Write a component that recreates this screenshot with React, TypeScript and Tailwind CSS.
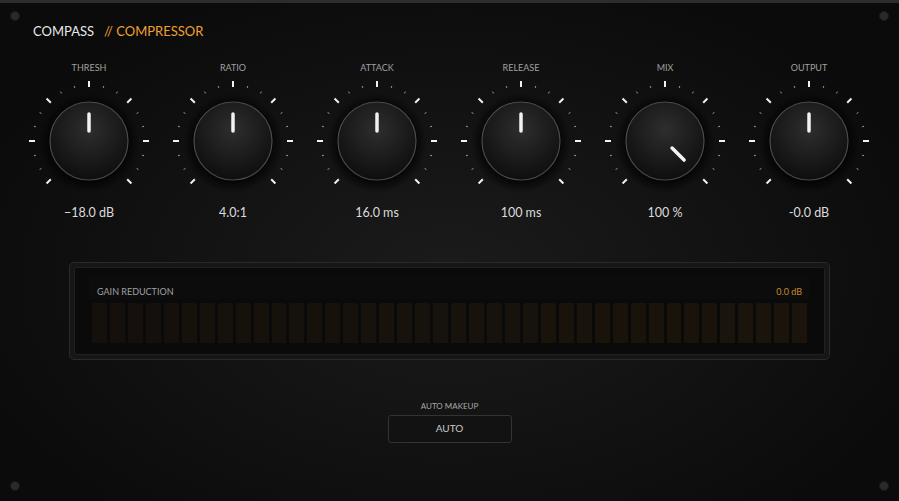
import React from "react";

const F = { fontFamily: '"Lato","Open Sans",sans-serif' };

function Knob({ angle }: { angle: number }) {
  const ticks = [];
  for (let a = -135; a <= 135; a += 15) {
    const major = a % 45 === 0;
    const r1 = major ? 54 : 55;
    const r2 = major ? 60 : 57;
    const rad = ((a - 90) * Math.PI) / 180;
    ticks.push(
      <line key={a} x1={70 + r1 * Math.cos(rad)} y1={70 + r1 * Math.sin(rad)} x2={70 + r2 * Math.cos(rad)} y2={70 + r2 * Math.sin(rad)}
        stroke="#fff" strokeOpacity={major ? 0.95 : 0.6} strokeWidth={major ? 2 : 1} />
    );
  }
  const rad = ((angle - 90) * Math.PI) / 180;
  return (
    <svg width="140" height="140" viewBox="0 0 140 140">
      <defs>
        <radialGradient id="kg" cx="50%" cy="35%" r="65%">
          <stop offset="0" stopColor="#2e2e2e" />
          <stop offset="1" stopColor="#0e0e0e" />
        </radialGradient>
        <radialGradient id="sh" cx="50%" cy="50%" r="50%">
          <stop offset="0.7" stopColor="#000" stopOpacity="0.9" />
          <stop offset="1" stopColor="#000" stopOpacity="0" />
        </radialGradient>
      </defs>
      {ticks}
      <circle cx="70" cy="72" r="50" fill="url(#sh)" />
      <circle cx="70" cy="70" r="39" fill="url(#kg)" stroke="#4a4a4a" strokeWidth="1.2" />
      <line x1={70 + 10 * Math.cos(rad)} y1={70 + 10 * Math.sin(rad)} x2={70 + 27 * Math.cos(rad)} y2={70 + 27 * Math.sin(rad)}
        stroke="#f2f2f2" strokeWidth="3.5" strokeLinecap="round" />
    </svg>
  );
}

const knobs = [
  ["THRESH", "−18.0 dB", 0],
  ["RATIO", "4.0:1", 0],
  ["ATTACK", "16.0 ms", 0],
  ["RELEASE", "100 ms", 0],
  ["MIX", "100 %", 135],
  ["OUTPUT", "-0.0 dB", 0],
] as const;

function Screw() {
  return <div className="w-[10px] h-[10px] rounded-full bg-[#2a2a2a] border border-[#1a1a1a]" />;
}

export default function App() {
  return (
    <div style={F} className="w-[899px] h-[501px] bg-[#0d0d0d] overflow-hidden relative">
      <div className="absolute inset-0" style={{ background: "radial-gradient(ellipse at 50% 55%, #1b1b1b 0%, #121212 45%, #0b0b0b 80%)" }} />
      <div className="absolute top-0 left-0 right-0 h-[3px] bg-[#2b2d30]" />
      <div className="absolute left-[10px] top-[11px]"><Screw /></div>
      <div className="absolute right-[10px] top-[11px]"><Screw /></div>
      <div className="absolute left-[10px] bottom-[10px]"><Screw /></div>
      <div className="absolute right-[10px] bottom-[10px]"><Screw /></div>
      <div className="relative flex flex-col">
        <div className="flex items-center gap-[10px] pl-[33px] pt-[21px] h-[42px] text-[13px]">
          <span className="text-[#e8e8e8]">COMPASS</span>
          <span className="text-[#f0a030]">// COMPRESSOR</span>
        </div>
        <div className="flex pl-[17px] mt-[20px]">
          {knobs.map(([l, v, a]) => (
            <div key={l} className="w-[144px] flex flex-col items-center">
              <div className="text-[9px] text-[#a0a0a0] h-[12px] leading-[12px]">{l}</div>
              <div className="-mt-[3px] -mb-[7px]"><Knob angle={a} /></div>
              <div className="text-[12.5px] text-[#dcdcdc]">{v}</div>
            </div>
          ))}
        </div>
        <div className="mx-[69px] mt-[39px] h-[98px] rounded-[5px] bg-[#161616] border border-[#2a2a2a] p-[4px]">
          <div className="h-full rounded-[3px] bg-[#0a0a0a] border border-[#202020] px-[14px] pt-[9px]">
            <div className="bg-[#0c0c0c] px-[8px] flex justify-between text-[9px] leading-[14px] pt-[8px]">
              <span className="text-[#a0a0a0]">GAIN REDUCTION</span>
              <span className="text-[#c88a2a]">0.0 dB</span>
            </div>
            <div className="flex gap-[3px] px-[3px] mt-[4px]">
              {Array.from({ length: 40 }).map((_, i) => (
                <div key={i} className="h-[40px] flex-1 rounded-[1px]" style={{ background: `rgb(${22 + i * 0.1},${16 + i * 0.1},${12})` }} />
              ))}
            </div>
          </div>
        </div>
        <div className="flex flex-col items-center mt-[41px]">
          <div className="text-[8px] text-[#a8a8a8] leading-[10px]">AUTO MAKEUP</div>
          <div className="mt-[4px] w-[124px] h-[28px] rounded-[3px] bg-[#121212] border border-[#333] flex items-center justify-center text-[10px] text-[#c8c8c8]">AUTO</div>
        </div>
      </div>
    </div>
  );
}
